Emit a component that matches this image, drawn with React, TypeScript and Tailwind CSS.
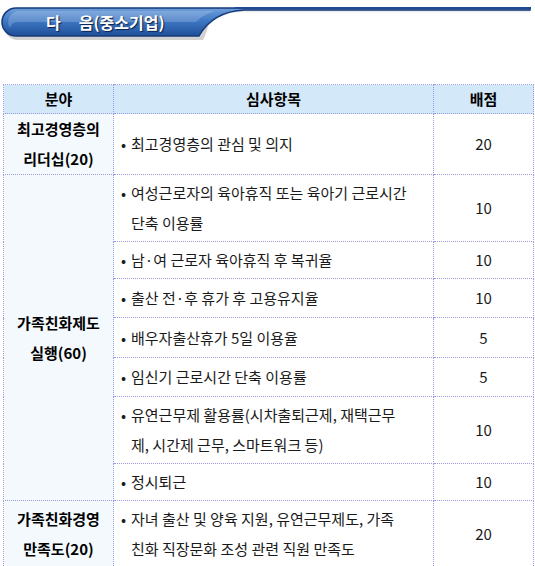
const font = { fontFamily: '"Noto Sans CJK KR", "Noto Sans", sans-serif' };

type Row = { items: string[][]; score: string; h: string };

const groups: { title: string[]; rows: Row[] }[] = [
  {
    title: ['최고경영층의', '리더십(20)'],
    rows: [{ items: [['최고경영층의 관심 및 의지']], score: '20', h: 'h-[61px]' }],
  },
  {
    title: ['가족친화제도', '실행(60)'],
    rows: [
      { items: [['여성근로자의 육아휴직 또는 육아기 근로시간', '단축 이용률']], score: '10', h: 'h-[67px]' },
      { items: [['남·여 근로자 육아휴직 후 복귀율']], score: '10', h: 'h-[37px]' },
      { items: [['출산 전·후 휴가 후 고용유지율']], score: '10', h: 'h-[39px]' },
      { items: [['배우자출산휴가 5일 이용율']], score: '5', h: 'h-[40px]' },
      { items: [['임신기 근로시간 단축 이용률']], score: '5', h: 'h-[39px]' },
      { items: [['유연근무제 활용률(시차출퇴근제, 재택근무', '제, 시간제 근무, 스마트워크 등)']], score: '10', h: 'h-[67px]' },
      { items: [['정시퇴근']], score: '10', h: 'h-[37px]' },
    ],
  },
  {
    title: ['가족친화경영', '만족도(20)'],
    rows: [
      { items: [['자녀 출산 및 양육 지원, 유연근무제도, 가족', '친화 직장문화 조성 관련 직원 만족도']], score: '20', h: 'h-[67px]' },
    ],
  },
];

function Banner() {
  return (
    <div className="relative h-[44px] w-[535px]">
      <svg width="535" height="44" viewBox="0 0 535 44" className="absolute left-0 top-0">
        <defs>
          <linearGradient id="pill" x1="0" y1="0" x2="0" y2="1">
            <stop offset="0" stopColor="#6f9fdc" />
            <stop offset="0.45" stopColor="#3f78c4" />
            <stop offset="1" stopColor="#1f4f98" />
          </linearGradient>
          <linearGradient id="shade" x1="0" y1="0" x2="0" y2="1">
            <stop offset="0" stopColor="#b8b8b8" />
            <stop offset="1" stopColor="#ffffff" stopOpacity="0" />
          </linearGradient>
        </defs>
        <rect x="200" y="9" width="330" height="5" fill="url(#shade)" />
        <path d="M18,11 L200,11 C214,12 208,30 203,40 L18,40 A14.5,14.5 0 0 1 18,11 Z" fill="#9a9a9a" opacity="0.45" />
        <path
          d="M16,8 L530,8 L530,10 L245,10 C222,11 208,20 199,36 L16,36 A14,14 0 0 1 16,8 Z"
          fill="url(#pill)"
          stroke="#163a78"
          strokeWidth="1.5"
        />
        <path d="M18,11 L215,11 C205,14 200,18 196,22 L18,22 A8,8 0 0 0 10,28 A11,11 0 0 1 18,11 Z" fill="#ffffff" opacity="0.18" />
        <rect x="235" y="7" width="296" height="2" fill="#1d4a90" />
      </svg>
      <div
        className="absolute left-[46px] top-[10px] flex text-[16px] font-bold leading-[24px] text-white [text-shadow:1px_1px_1px_#0b1f45]"
        style={font}
      >
        <span>다</span>
        <span className="ml-[18px]">음(중소기업)</span>
      </div>
    </div>
  );
}

function Item({ lines }: { lines: string[] }) {
  return (
    <div className="flex">
      <span className="w-[10px] shrink-0">•</span>
      <div>
        {lines.map((l) => (
          <div key={l}>{l}</div>
        ))}
      </div>
    </div>
  );
}

export default function App() {
  const cell = 'border border-dotted border-[#9c9ce0]';
  return (
    <div className="min-h-[566px] w-[535px] overflow-hidden bg-white" style={font}>
      <Banner />
      <div className="mt-[40px] pl-[3px]">
        <table className="w-[530px] table-fixed border-collapse text-[15px] leading-[30px] text-[#1a1a1a]">
          <colgroup>
            <col className="w-[110px]" />
            <col className="w-[320px]" />
            <col className="w-[100px]" />
          </colgroup>
          <thead>
            <tr className="h-[29px] bg-[#d3e8f8] font-bold text-black">
              <th className={`${cell} leading-[26px]`}>분야</th>
              <th className={`${cell} leading-[26px]`}>심사항목</th>
              <th className={`${cell} leading-[26px]`}>배점</th>
            </tr>
          </thead>
          <tbody>
            {groups.map((g) =>
              g.rows.map((r, i) => (
                <tr key={g.title[0] + i} className={r.h}>
                  {i === 0 && (
                    <td rowSpan={g.rows.length} className={`${cell} bg-[#f4f9fd] text-center font-bold text-black`}>
                      {g.title.map((t) => (
                        <div key={t}>{t}</div>
                      ))}
                    </td>
                  )}
                  <td className={`${cell} px-[7px] align-middle`}>
                    {r.items.map((it) => (
                      <Item key={it[0]} lines={it} />
                    ))}
                  </td>
                  <td className={`${cell} text-center`}>{r.score}</td>
                </tr>
              ))
            )}
          </tbody>
        </table>
      </div>
    </div>
  );
}
